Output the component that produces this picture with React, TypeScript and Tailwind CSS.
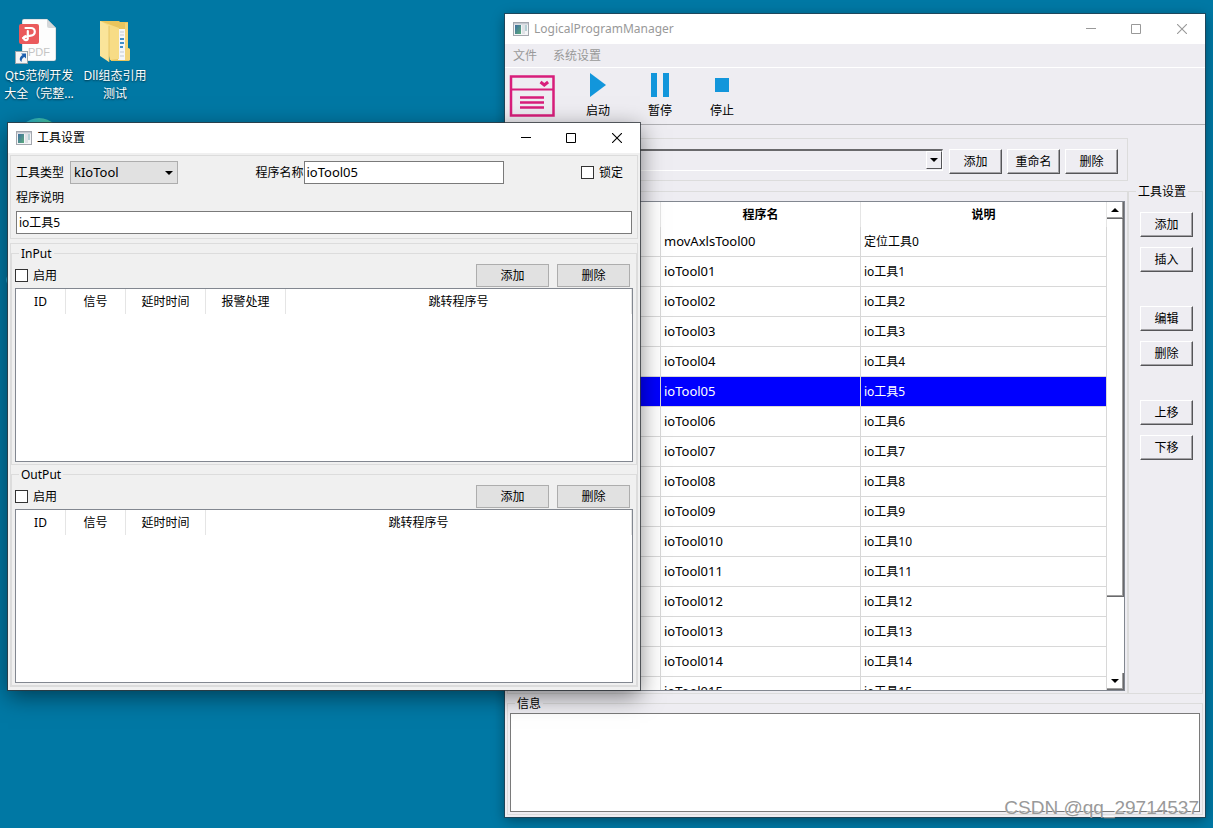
import { useState } from 'react';
import type { ReactNode } from 'react';

interface Program { name: string; desc: string; }

const PROGRAMS: Program[] = [
  { name: 'movAxlsTool00', desc: '定位工具0' },
  ...Array.from({ length: 15 }, (_, i) => ({ name: `ioTool0${i + 1}`, desc: `io工具${i + 1}` })),
];

function AppIcon() {
  return (
    <svg width="16" height="14" viewBox="0 0 16 14" aria-hidden="true">
      <defs>
        <linearGradient id="appGlass" x1="0" y1="0" x2="1" y2="1">
          <stop offset="0" stopColor="#3f6fa0" />
          <stop offset="1" stopColor="#5cab7c" />
        </linearGradient>
      </defs>
      <rect x="0.5" y="0.5" width="15" height="13" fill="#f4f5f7" stroke="#a3a7ae" />
      <rect x="1" y="1" width="14" height="1.5" fill="#c3c8d0" />
      <rect x="2" y="3" width="6" height="9" fill="url(#appGlass)" />
      <rect x="9" y="3" width="3" height="9" fill="#dfe2e6" />
      <rect x="12" y="3" width="2" height="6" fill="#b5cfd4" />
    </svg>
  );
}

function TitleBar({ title, active }: { title: string; active: boolean }) {
  return (
    <header className={`flex h-[30px] shrink-0 items-center bg-white pl-2 ${active ? 'text-black' : 'text-[#999999]'}`}>
      <AppIcon />
      <h1 className="ml-[5px] flex-1 text-[12px] leading-[18px]">{title}</h1>
      <button type="button" aria-label="最小化" className="flex h-full w-[45px] items-center justify-center">
        <svg width="10" height="10" viewBox="0 0 10 10"><path d="M0 4.5h10" stroke="currentColor" /></svg>
      </button>
      <button type="button" aria-label="最大化" className="flex h-full w-[46px] items-center justify-center">
        <svg width="10" height="10" viewBox="0 0 10 10"><path d="M.5.5h9v9h-9z" fill="none" stroke="currentColor" /></svg>
      </button>
      <button type="button" aria-label="关闭" className="flex h-full w-[46px] items-center justify-center">
        <svg width="10" height="10" viewBox="0 0 10 10"><path d="M0 0l10 10M10 0L0 10" stroke="currentColor" strokeWidth="1.1" /></svg>
      </button>
    </header>
  );
}

// Raised button of the main window
function ClassicButton({ children }: { children: ReactNode }) {
  return (
    <button
      type="button"
      className="h-[25px] w-[53px] shrink-0 border border-b-[#555558] border-l-white border-r-[#555558] border-t-white bg-[#eeedf2] text-[12px] shadow-[inset_-1px_-1px_0_#a3a2a6]"
    >
      {children}
    </button>
  );
}

function FlatButton({ children }: { children: ReactNode }) {
  return (
    <button type="button" className="h-[23px] w-[73px] border border-[#adadad] bg-[#e1e1e1] text-[12px]">
      {children}
    </button>
  );
}

function CheckBox({ id, label }: { id: string; label: string }) {
  return (
    <div className="flex items-center gap-[5px]">
      <input id={id} type="checkbox" className="size-[13px] appearance-none border border-[#333333] bg-white checked:bg-[#333333]" />
      <label htmlFor={id}>{label}</label>
    </div>
  );
}

function Triangle({ up }: { up?: boolean }) {
  return (
    <svg width="8" height="4" viewBox="0 0 8 4" aria-hidden="true">
      <path d={up ? 'M0 4L4 0L8 4z' : 'M0 0h8L4 4z'} fill="black" />
    </svg>
  );
}

function ToolButton({ label, children }: { label: string; children: ReactNode }) {
  return (
    <button type="button" className="flex w-[62px] flex-col items-center gap-[5px]">
      <svg width="24" height="24" viewBox="0 0 24 24" fill="#1296db" aria-hidden="true">{children}</svg>
      <span className="leading-[18px]">{label}</span>
    </button>
  );
}

function ProgramTable() {
  const [selected, setSelected] = useState(5);

  return (
    <div className="flex min-h-0 flex-1 border border-[#828790] bg-white">
      <div className="min-w-0 flex-1 overflow-hidden">
        <table className="w-full table-fixed border-separate border-spacing-0">
          <colgroup>
            <col className="w-[150px]" />
            <col className="w-[200px]" />
            <col />
          </colgroup>
          <thead>
            <tr className="h-[25px]">
              <th className="border-r border-[#e5e5e5]"></th>
              <th className="border-r border-[#e5e5e5] font-bold">程序名</th>
              <th className="border-r border-[#e5e5e5] font-bold">说明</th>
            </tr>
          </thead>
          <tbody>
            {PROGRAMS.map((p, i) => (
              <tr
                key={p.name}
                onClick={() => setSelected(i)}
                className={`h-[30px] ${i === selected ? 'bg-[#0000ff] text-white' : ''}`}
              >
                <td className="border-b border-r border-[#d8d8d8]"></td>
                <td className="border-b border-r border-[#d8d8d8] px-[3px] pb-[2px] text-[13px] leading-[18px]">{p.name}</td>
                <td className="border-b border-r border-[#d8d8d8] px-[3px]">{p.desc}</td>
              </tr>
            ))}
          </tbody>
        </table>
      </div>
      <div className="flex w-[17px] shrink-0 flex-col">
        <button type="button" aria-label="向上滚动" className="flex h-[17px] items-center justify-center border-b border-r border-[#69696c] shadow-[inset_-1px_-1px_0_#a0a0a0]">
          <Triangle up />
        </button>
        <div className="flex-[378] border-b border-r border-[#69696c] shadow-[inset_-1px_-1px_0_#a0a0a0]"></div>
        <div className="flex-[76]"></div>
        <button type="button" aria-label="向下滚动" className="flex h-[17px] items-center justify-center border-b border-r border-[#69696c] shadow-[inset_-1px_-1px_0_#a0a0a0]">
          <Triangle />
        </button>
      </div>
    </div>
  );
}

function MainWindow() {
  return (
    <section className="absolute bottom-[11px] left-[505px] right-2 top-[14px] flex flex-col bg-[#eeedf2] shadow-[0_0_0_1px_rgba(40,60,75,0.75),0_3px_12px_rgba(0,0,0,0.4)]">
      <TitleBar title="LogicalProgramManager" active={false} />
      <nav className="flex h-6 shrink-0 items-center gap-4 border-b border-white px-2 text-[#999999]">
        <button type="button">文件</button>
        <button type="button">系统设置</button>
      </nav>
      <div className="flex h-[57px] shrink-0 items-start border-b border-[#b0b0b4] pl-1 pt-[5px]">
        <button type="button" aria-label="程序" className="mr-3 pt-[2px]">
          <svg width="46" height="42" viewBox="0 0 46 42" fill="none" stroke="#d81e7b" strokeWidth="2.5">
            <path d="M2 1.5h42.500v39H2z" />
            <path d="M1 14.500h44" strokeWidth="2" />
            <path d="M11 22.500h24M11 27.500h24M11 32.500h24" />
            <path d="M31.500 7l3.800 3 3.800-3" strokeWidth="3" />
          </svg>
        </button>
        <ToolButton label="启动"><path d="M4 0l16 12L4 24z" /></ToolButton>
        <ToolButton label="暂停"><path d="M3 0h6v24H3zM15 0h6v24h-6z" /></ToolButton>
        <ToolButton label="停止"><path d="M5 5h14v14H5z" /></ToolButton>
      </div>

      <div className="flex min-h-0 flex-1 px-[2px]">
        <div className="flex min-w-0 flex-1 flex-col pt-[13px]">
          <div className="flex h-[43px] shrink-0 items-center gap-[5px] border border-[#dcdcdc] pl-[3px] pr-[9px] pt-1">
            <div className="relative mb-[3px] mr-[1px] min-w-0 flex-1">
              <select
                aria-label="程序"
                className="block h-[22px] w-full appearance-none border-b border-r border-t-2 border-b-white border-r-white border-t-[#69696c] bg-[#eeedf2]"
              >
                <option></option>
              </select>
              <span className="pointer-events-none absolute bottom-[2px] right-[1px] top-[2px] flex w-4 items-center justify-center border border-b-[#555558] border-l-white border-r-[#555558] border-t-white bg-[#eeedf2]">
                <Triangle />
              </span>
            </div>
            <ClassicButton>添加</ClassicButton>
            <ClassicButton>重命名</ClassicButton>
            <ClassicButton>删除</ClassicButton>
          </div>
          <div className="mt-[10px] flex min-h-0 flex-1 flex-col border border-[#dcdcdc] px-[2px] pb-[2px] pt-[9px]">
            <ProgramTable />
          </div>
        </div>

        <fieldset className="mt-[57px] w-[75px] shrink-0 border border-[#dcdcdc] pl-[7px] pt-3">
          <legend className="h-[18px] px-[2px] leading-5">工具设置</legend>
          <div className="flex flex-col gap-[34px] pl-1">
            <div className="flex flex-col gap-[10px]">
              <ClassicButton>添加</ClassicButton>
              <ClassicButton>插入</ClassicButton>
            </div>
            <div className="flex flex-col gap-[10px]">
              <ClassicButton>编辑</ClassicButton>
              <ClassicButton>删除</ClassicButton>
            </div>
            <div className="flex flex-col gap-[10px]">
              <ClassicButton>上移</ClassicButton>
              <ClassicButton>下移</ClassicButton>
            </div>
          </div>
        </fieldset>
      </div>

      <div className="shrink-0 px-[2px] pb-[2px]">
        <fieldset className="border border-[#dcdcdc] px-[2px] pb-[2px] pt-px">
          <legend className="ml-[5px] h-[18px] px-[2px] leading-5">信息</legend>
          <textarea aria-label="信息" readOnly className="block h-[99px] w-full resize-none border border-[#7a7a7a] bg-white" />
        </fieldset>
      </div>
    </section>
  );
}

interface IoGroupProps { id: string; title: string; columns: { label: string; width: string }[]; }

function IoGroup({ id, title, columns }: IoGroupProps) {
  return (
    <fieldset className="border border-[#dcdcdc] px-[3px] pb-[2px] pt-[2px]">
      <legend className="ml-1 h-[18px] px-[2px] text-[12px] leading-5">{title}</legend>
      <div className="flex items-center gap-2 pr-[3px]">
        <div className="flex-1">
          <CheckBox id={`${id}-enable`} label="启用" />
        </div>
        <FlatButton>添加</FlatButton>
        <FlatButton>删除</FlatButton>
      </div>
      <div className="mt-px h-[174px] border border-[#828790] bg-white">
        <table className="w-full table-fixed border-separate border-spacing-0">
          <thead>
            <tr className="h-[25px]">
              {columns.map((c) => (
                <th key={c.label} className={`border-r border-[#e5e5e5] font-normal ${c.width}`}>{c.label}</th>
              ))}
            </tr>
          </thead>
        </table>
      </div>
    </fieldset>
  );
}

function ToolDialog() {
  const [name, setName] = useState('ioTool05');
  const [desc, setDesc] = useState('io工具5');

  return (
    <section className="absolute left-2 top-[123px] flex w-[632px] flex-col bg-[#f0f0f0] shadow-[0_0_0_1px_rgba(50,55,60,0.8),0_6px_22px_rgba(0,0,0,0.5)]">
      <TitleBar title="工具设置" active />
      <div className="flex flex-col gap-1 px-[2px] pb-[3px] pt-[2px]">
        <div className="border border-[#dcdcdc] px-[5px] pb-1 pt-[5px]">
          <div className="flex items-center justify-between pr-[9px]">
            <div className="flex items-center gap-[6px]">
              <label htmlFor="tool-type">工具类型</label>
              <div className="relative">
                <select id="tool-type" className="block h-[23px] w-[108px] appearance-none border border-[#adadad] bg-[#e1e1e1] px-[3px] pb-[2px] text-[13px]">
                  <option>kIoTool</option>
                </select>
                <span className="pointer-events-none absolute bottom-0 right-[5px] top-0 flex items-center">
                  <Triangle />
                </span>
              </div>
            </div>
            <div className="flex items-center">
              <label htmlFor="tool-name">程序名称</label>
              <input id="tool-name" value={name} onChange={(e) => setName(e.target.value)} className="h-[23px] w-[200px] border border-[#7a7a7a] bg-white px-[2px] pb-[2px] text-[13px]" />
            </div>
            <CheckBox id="tool-lock" label="锁定" />
          </div>
          <label htmlFor="tool-desc" className="block leading-[27px]">程序说明</label>
          <input id="tool-desc" value={desc} onChange={(e) => setDesc(e.target.value)} className="block h-[23px] w-full border border-[#7a7a7a] bg-white px-[2px] pb-[2px] text-[12px]" />
        </div>
        <div className="border border-[#dcdcdc]">
          <IoGroup
            id="input"
            title="InPut"
            columns={[
              { label: 'ID', width: 'w-[50px]' },
              { label: '信号', width: 'w-[60px]' },
              { label: '延时时间', width: 'w-[80px]' },
              { label: '报警处理', width: 'w-[80px]' },
              { label: '跳转程序号', width: 'w-auto' },
            ]}
          />
          <IoGroup
            id="output"
            title="OutPut"
            columns={[
              { label: 'ID', width: 'w-[50px]' },
              { label: '信号', width: 'w-[60px]' },
              { label: '延时时间', width: 'w-[80px]' },
              { label: '跳转程序号', width: 'w-auto' },
            ]}
          />
        </div>
      </div>
    </section>
  );
}

function PdfIcon() {
  return (
    <svg width="48" height="48" viewBox="6 0 48 48" className="mb-px" aria-hidden="true">
      <path d="M15 1h23l9 9v31a2 2 0 0 1-2 2H15a2 2 0 0 1-2-2V3a2 2 0 0 1 2-2z" fill="#fdfdfd" stroke="#4d6b7a" strokeOpacity="0.5" strokeWidth="0.7" />
      <path d="M38 1l9 9h-7a2 2 0 0 1-2-2z" fill="#d5d8da" />
      <text x="19" y="38" fontSize="11" fill="#c4c4c4" fontFamily="Liberation Sans, sans-serif">PDF</text>
      <rect x="10" y="6" width="20" height="20" rx="2" fill="#ea5a5c" />
      <path d="M16.500 10H22a3.800 3.800 0 0 1 0 7.600c-3 0-5 .8-8 2.400M18.800 13v7.200a2 2 0 1 1-2.500-2" fill="none" stroke="white" strokeWidth="2.200" strokeLinecap="round" />
      <rect x="6.500" y="33.500" width="12" height="12" fill="#f5f5f5" stroke="#9aa5ab" />
      <path d="M12 35.500h5v5l-1.600-1.600c-2 1-3 2.600-2.800 5.100-2.600-1.500-2.600-4.800 1-7z" fill="#1c5fae" />
    </svg>
  );
}

function FolderIcon() {
  return (
    <svg width="48" height="48" viewBox="-1 0 48 48" className="mb-px" aria-hidden="true">
      <path d="M8 3h19l1 1h8v26l2 1v11l-1 1H19z" fill="#e9c55d" />
      <path d="M27 11h6v31h-7z" fill="#f4f6f8" />
      <path d="M28 14h4M28 17h4M28 34h4M28 38h4" stroke="#c3c9d0" />
      <path d="M28 21h4M28 25h4M28 29h3" stroke="#3f8fc9" strokeWidth="2" />
      <path d="M33 5h3v25l2 1v11h-5z" fill="#f3d477" />
      <path d="M8 3l19 7v31l-9 1z" fill="#f7dc86" />
      <path d="M8 3l9 5v36L8 38z" fill="#fae49a" />
      <path d="M17 8v36" stroke="#dfba55" strokeWidth="0.7" />
    </svg>
  );
}

function DesktopIcon({ children, lines }: { children: ReactNode; lines: string[] }) {
  return (
    <a href="#" className="flex w-[76px] flex-col items-center text-white">
      {children}
      {lines.map((line) => (
        <span key={line} className="whitespace-nowrap leading-[18px] [text-shadow:0_1px_2px_rgba(0,0,0,0.6)]">{line}</span>
      ))}
    </a>
  );
}

export default function App() {
  return (
    <main className="relative h-screen min-h-[700px] overflow-hidden bg-[#0078a4] font-['Noto_Sans','Noto_Sans_CJK_SC',sans-serif] text-[12px] leading-[18px] text-black">
      <div className="flex pl-px pt-[18px]">
        <DesktopIcon lines={['Qt5范例开发', '大全（完整...']}><PdfIcon /></DesktopIcon>
        <DesktopIcon lines={['Dll组态引用', '测试']}><FolderIcon /></DesktopIcon>
      </div>
      <span className="absolute left-[17px] top-[118px] size-11 rounded-full bg-gradient-to-r from-[#21a9d6] to-[#4fc98a]"></span>
      <span className="absolute left-[6px] top-[274px] size-3 rounded-full bg-[#21a9d6]"></span>

      <MainWindow />
      <ToolDialog />

      <p className="pointer-events-none absolute bottom-2 right-[14px] font-['Liberation_Sans',sans-serif] text-[19px] leading-6 text-[#999999] [text-shadow:-1px_-1px_0_rgba(255,255,255,0.8)]">
        CSDN @qq_29714537
      </p>
    </main>
  );
}
